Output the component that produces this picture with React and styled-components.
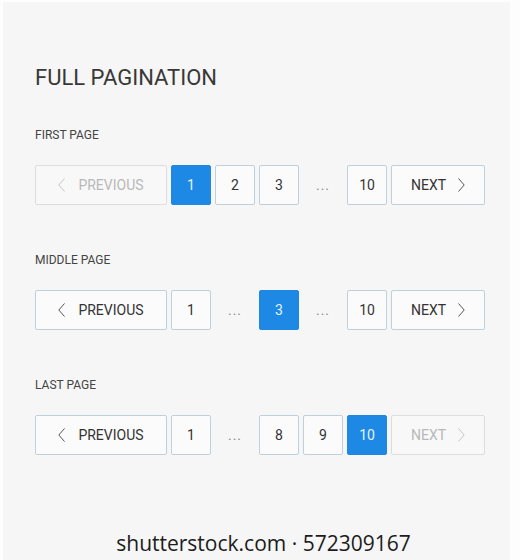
import React from 'react'
import styled, { createGlobalStyle } from 'styled-components'

const GlobalStyle = createGlobalStyle`
    html, body {
        margin: 0;
        padding: 0;
        background: #fdfdfd;
    }
`

const Frame = styled.div`
    box-sizing: border-box;
    width: 520px;
    height: 560px;
    border-left: 3px solid #fdfdfd;
    border-right: 10px solid #fdfdfd;
    border-top: 2px solid #fdfdfd;
    background: #f6f6f6;
    padding: 64px 0 0 32px;
    font-family: Roboto, "Liberation Sans", sans-serif;
    overflow: hidden;
`

const Title = styled.h1`
    margin: 0 0 37px;
    font-size: 22px;
    line-height: 24px;
    font-weight: 400;
    color: #383838;
`

const Section = styled.section`
    margin-bottom: 47px;
`

const Label = styled.div`
    font-size: 12px;
    line-height: 16px;
    color: #444;
    margin-bottom: 22px;
`

const Row = styled.div`
    display: flex;
    gap: 4px;
    height: 40px;
`

const Button = styled.div`
    box-sizing: border-box;
    height: 40px;
    display: flex;
    align-items: center;
    justify-content: center;
    border-radius: 2px;
    font-size: 14px;
    border: 1px solid ${p => (p.$active ? '#1f87e2' : p.$disabled ? '#dddddd' : '#bfd0dd')};
    background: ${p => (p.$active ? '#1e88e5' : p.$disabled ? '#f8f8f8' : '#fbfbfb')};
    color: ${p => (p.$active ? '#e6f3ff' : p.$disabled ? '#b8b8b8' : '#333')};
`

const PageButton = styled(Button)`
    width: 40px;
`

const NavButton = styled(Button)`
    width: ${p => p.$width}px;
    gap: ${p => p.$gap}px;

    svg {
        color: ${p => (p.$disabled ? '#c4c4c4' : '#555')};
    }
`

const Ellipsis = styled.div`
    width: 40px;
    height: 40px;
    display: flex;
    align-items: center;
    justify-content: center;
    color: #888;
    font-size: 14px;
    letter-spacing: 1px;
`

const Watermark = styled.div`
    margin: 74px 0 0 -25px;
    width: 507px;
    text-align: center;
    font-family: "Open Sans", "Noto Sans", sans-serif;
    font-size: 21px;
    line-height: 28px;
    color: #1c1c1c;
`

const Chevron = ({ dir }) => (
  <svg width="7" height="14" viewBox="0 0 7 14" fill="none">
    <path
      d={dir === 'left' ? 'M6.5 0.5 L0.8 7 L6.5 13.5' : 'M0.5 0.5 L6.2 7 L0.5 13.5'}
      stroke="currentColor"
      strokeWidth="1"
    />
  </svg>
)

const Prev = ({ disabled }) => (
  <NavButton $width={132} $gap={13} $disabled={disabled}>
    <Chevron dir="left" />
    <span>PREVIOUS</span>
  </NavButton>
)

const Next = ({ disabled }) => (
  <NavButton $width={94} $gap={12} $disabled={disabled}>
    <span>NEXT</span>
    <Chevron dir="right" />
  </NavButton>
)

const sections = [
  { label: 'FIRST PAGE', items: ['1', '2', '3', '…', '10'], active: '1', first: true },
  { label: 'MIDDLE PAGE', items: ['1', '…', '3', '…', '10'], active: '3' },
  { label: 'LAST PAGE', items: ['1', '…', '8', '9', '10'], active: '10', last: true },
]

const App = () => {
  return (
    <Frame>
      <GlobalStyle />
      <Title>FULL PAGINATION</Title>
      {sections.map(s => (
        <Section key={s.label}>
          <Label>{s.label}</Label>
          <Row>
            <Prev disabled={s.first} />
            {s.items.map((item, i) =>
              item === '…' ? (
                <Ellipsis key={i}>...</Ellipsis>
              ) : (
                <PageButton key={i} $active={item === s.active}>{item}</PageButton>
              )
            )}
            <Next disabled={s.last} />
          </Row>
        </Section>
      ))}
      <Watermark>shutterstock.com · 572309167</Watermark>
    </Frame>
  )
}

export default App
